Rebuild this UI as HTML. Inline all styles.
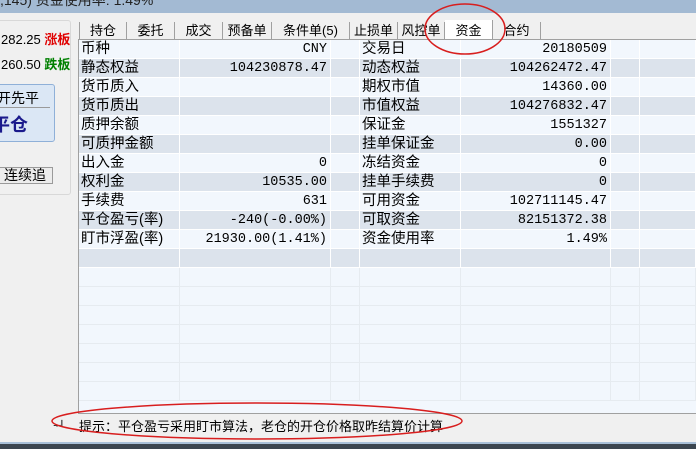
<!DOCTYPE html>
<html><head><meta charset="utf-8"><style>
*{margin:0;padding:0;box-sizing:border-box}
body{width:696px;height:449px;overflow:hidden;background:#f0f0f0;position:relative;font-family:"Liberation Sans","Noto Sans CJK SC",sans-serif;font-size:13px;color:#000}
.a{position:absolute;white-space:nowrap}
.tab{position:absolute;top:22px;height:17px;border-right:1px solid #a0a0a0;text-align:center;font-size:13px;line-height:18px;background:#f0f0f0}
.row{position:absolute;left:79px;width:617px;height:19px}
.c{position:absolute;top:0;height:19px;line-height:19px;font-size:14.5px;border-right:1px solid #fff}
.n{font-family:"Liberation Mono","Noto Sans CJK SC",monospace;font-size:13.5px;text-align:right;padding-right:3px}
</style></head><body>
<div class="a" style="left:0;top:0;width:696px;height:13px;background:#a3bad3;overflow:hidden"><span class="a" style="left:0;top:-10px;font-size:14px;color:#222">,145) 资金使用率: 1.49%</span></div>
<!-- left panel -->
<div class="a" style="left:-5px;top:20px;width:76px;height:175px;border:1px solid #d8d8d8;border-radius:3px;background:#f0f0f0"></div>
<div class="a" style="left:1px;top:29px;font-size:13px">282.25 <span style="color:#e00000;font-weight:bold">涨板</span></div>
<div class="a" style="left:1px;top:54px;font-size:13px">260.50 <span style="color:#008000;font-weight:bold">跌板</span></div>
<div class="a" style="left:-5px;top:84px;width:60px;height:58px;border:1px solid #8fb0d8;border-radius:3px;background:#dbe7f5"></div>
<div class="a" style="left:0;top:107px;width:50px;height:1px;background:#9a9a9a"></div>
<div class="a" style="left:-3px;top:88px;font-size:14px">开先平</div>
<div class="a" style="left:-8px;top:111px;font-size:18px;color:#1a1a8c;font-weight:bold">平仓</div>
<div class="a" style="left:-3px;top:167px;width:56px;height:17px;border:1px solid #9a9a9a;background:#ececec;font-size:14px;line-height:15px;text-align:center">连续追</div>
<!-- tabs -->
<div class="a" style="left:79px;top:22px;width:462px;height:17px;border-left:1px solid #a0a0a0"></div>
<div class="tab" style="left:80px;width:47px">持仓</div>
<div class="tab" style="left:127px;width:48px">委托</div>
<div class="tab" style="left:175px;width:48px">成交</div>
<div class="tab" style="left:223px;width:49px">预备单</div>
<div class="tab" style="left:272px;width:78px">条件单(5)</div>
<div class="tab" style="left:350px;width:48px">止损单</div>
<div class="tab" style="left:398px;width:47px">风控单</div>
<div class="tab" style="left:445px;width:48px;background:#fff;top:20px;height:20px;line-height:21px">资金</div>
<div class="tab" style="left:493px;width:48px">合约</div>
<!-- table -->
<div class="a" style="left:78px;top:39px;width:618px;height:375px;border-top:1px solid #a0a0a0;border-left:1px solid #a0a0a0;border-bottom:1px solid #a0a0a0;background:#f2f7fd"></div>
<div id="t"></div>
<script>
var d=[["币种","CNY","交易日","20180509"],["静态权益","104230878.47","动态权益","104262472.47"],["货币质入","","期权市值","14360.00"],["货币质出","","市值权益","104276832.47"],["质押余额","","保证金","1551327"],["可质押金额","","挂单保证金","0.00"],["出入金","0","冻结资金","0"],["权利金","10535.00","挂单手续费","0"],["手续费","631","可用资金","102711145.47"],["平仓盈亏(率)","-240(-0.00%)","可取资金","82151372.38"],["盯市浮盈(率)","21930.00(1.41%)","资金使用率","1.49%"],["","","",""]];
var h="";
for(var i=0;i<19;i++){var r=d[i]||null;var bg=(i%2==1&&i<12)?"#dce3ec":"#f2f7fd";var bc=i<12?"#fff":"#e6ebf0";
h+='<div class="row" style="top:'+(40+i*19)+'px;background:'+bg+';border-bottom:1px solid '+bc+'">';
var cols=[[0,101],[101,151],[252,29],[281,101],[382,150],[532,29],[561,56]];
for(var j=0;j<7;j++){var t="";var cls="c";
if(r){if(j==0)t=r[0];if(j==1){t=r[1];cls+=" n"}if(j==3)t=r[2];if(j==4){t=r[3];cls+=" n"}}
h+='<div class="'+cls+'" style="left:'+cols[j][0]+'px;width:'+cols[j][1]+'px;border-right-color:'+bc+';padding-left:'+(j==0||j==3?2:0)+'px">'+t+'</div>';}
h+='</div>';}
document.getElementById("t").innerHTML=h;
</script>
<div class="a" style="left:0;top:414px;width:696px;height:31px;background:#f0f0f0"></div>
<div class="a" style="left:53px;top:417px;font-size:12px">ᅱ</div>
<div class="a" style="left:79px;top:416px;font-size:13px">提示：平仓盈亏采用盯市算法，老仓的开仓价格取昨结算价计算</div>
<div class="a" style="left:0;top:442px;width:696px;height:2px;background:#a9c0d8"></div>
<div class="a" style="left:0;top:444px;width:696px;height:5px;background:#3c4650"></div>
<svg class="a" style="left:0;top:0" width="696" height="449">
<ellipse cx="465" cy="29" rx="40" ry="25" fill="none" stroke="#d81e1e" stroke-width="1.5"/>
<ellipse cx="257" cy="421" rx="205" ry="18" fill="none" stroke="#d81e1e" stroke-width="1.5"/>
</svg>
</body></html>
